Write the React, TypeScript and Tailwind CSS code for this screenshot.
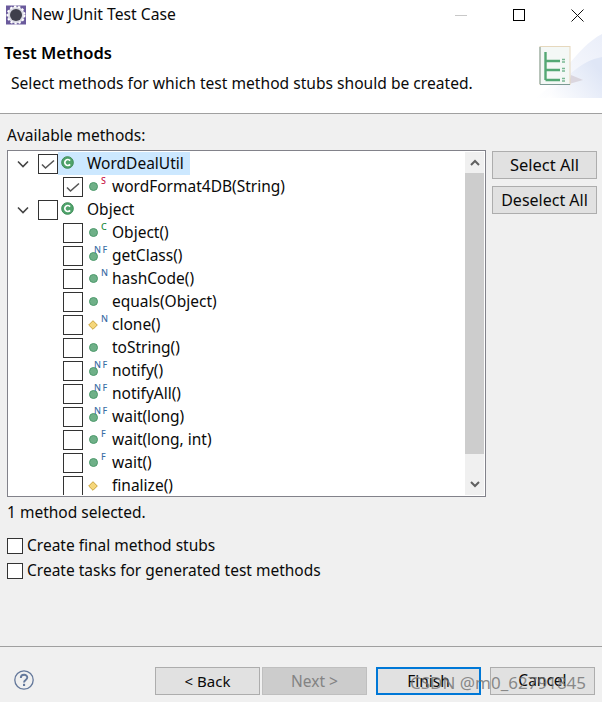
const font = { fontFamily: '"Noto Sans", sans-serif' };

type M = { name: string; kind?: 'dot' | 'diamond'; badge?: string; color?: string; checked?: boolean };

const methods: M[] = [
  { name: 'wordFormat4DB(String)', badge: 'S', color: 'text-[#c8174a]', checked: true },
];
const objectMethods: M[] = [
  { name: 'Object()', badge: 'C', color: 'text-[#1c8a3c]' },
  { name: 'getClass()', badge: 'NF' },
  { name: 'hashCode()', badge: 'N' },
  { name: 'equals(Object)' },
  { name: 'clone()', kind: 'diamond', badge: 'N' },
  { name: 'toString()' },
  { name: 'notify()', badge: 'NF' },
  { name: 'notifyAll()', badge: 'NF' },
  { name: 'wait(long)', badge: 'NF' },
  { name: 'wait(long, int)', badge: 'F' },
  { name: 'wait()', badge: 'F' },
  { name: 'finalize()', kind: 'diamond' },
];

function Check({ checked }: { checked?: boolean }) {
  return (
    <span className="flex h-[20px] w-[20px] shrink-0 items-center justify-center border border-[#333333] bg-white">
      {checked && (
        <svg width="14" height="12" viewBox="0 0 14 12" fill="none">
          <path d="M1 6.5 L4.5 10 L13 2.5" stroke="#555555" strokeWidth="1.6" />
        </svg>
      )}
    </span>
  );
}

function Chevron() {
  return (
    <svg width="12" height="8" viewBox="0 0 12 8" fill="none" className="shrink-0">
      <path d="M1 1.5 L6 6.5 L11 1.5" stroke="#444444" strokeWidth="1.6" />
    </svg>
  );
}

function ClassIcon() {
  return (
    <svg width="13" height="13" viewBox="0 0 14 14" className="mb-[3px] shrink-0">
      <circle cx="7" cy="7" r="6.3" fill="#4fa36b" stroke="#3c8a55" />
      <path d="M9.8 5 A3.2 3.2 0 1 0 9.8 9" fill="none" stroke="#ffffff" strokeWidth="1.8" />
    </svg>
  );
}

function MethodIcon({ m }: { m: M }) {
  const nf = m.badge === 'NF';
  return (
    <span className="relative flex h-[23px] w-[24px] shrink-0 items-center">
      {m.kind === 'diamond' ? (
        <svg width="10" height="10" viewBox="0 0 10 10">
          <path d="M5 .7 L9.3 5 L5 9.3 L.7 5 Z" fill="#f5d67a" stroke="#c9a33a" />
        </svg>
      ) : (
        <span className={`ml-[1px] block h-[9px] w-[9px] rounded-full border border-[#4d9a6c] bg-[#6fb088] ${nf ? 'mt-[1px]' : ''}`} />
      )}
      {m.badge && (
        <span
          className={`absolute top-[1px] text-[9px] leading-[10px] font-medium ${nf ? 'left-[6px] tracking-[1.5px]' : 'left-[13px]'} ${m.color ?? 'text-[#3a6ea5]'}`}
        >
          {m.badge}
        </span>
      )}
    </span>
  );
}

function MethodRow({ m }: { m: M }) {
  return (
    <div className="flex h-[23px] shrink-0 items-center pl-[54px]">
      <Check checked={m.checked} />
      <span className="ml-[5px]"><MethodIcon m={m} /></span>
      <span className="whitespace-nowrap text-[15.5px] text-[#0a0a0a]">{m.name}</span>
    </div>
  );
}

function ClassRow({ name, checked, selected }: { name: string; checked?: boolean; selected?: boolean }) {
  return (
    <div className="flex h-[23px] shrink-0 items-center pl-[8px]">
      <Chevron />
      <span className="ml-[9px]"><Check checked={checked} /></span>
      <span className={`flex h-[23px] items-center pl-[3px] pr-[6px] ${selected ? 'bg-[#cce8ff]' : ''}`}>
        <ClassIcon />
        <span className="ml-[13px] whitespace-nowrap text-[15.5px] text-[#0a0a0a]">{name}</span>
      </span>
    </div>
  );
}

function Button({ label, className = '' }: { label: string; className?: string }) {
  return (
    <button className={`flex h-[28px] items-center justify-center border border-[#adadad] bg-[#e1e1e1] text-[#0a0a0a] ${className}`}>
      {label}
    </button>
  );
}

function Scrollbar() {
  return (
    <div className="flex w-[19px] shrink-0 flex-col bg-[#f0f0f0]">
      <div className="flex h-[21px] items-center justify-center">
        <svg width="10" height="7" viewBox="0 0 10 7" fill="none">
          <path d="M1 6 L5 2 L9 6" stroke="#606060" strokeWidth="2" />
        </svg>
      </div>
      <div className="h-[281px] bg-[#cdcdcd]" />
      <div className="flex-1" />
      <div className="flex h-[21px] items-center justify-center">
        <svg width="10" height="7" viewBox="0 0 10 7" fill="none">
          <path d="M1 1 L5 5 L9 1" stroke="#606060" strokeWidth="2" />
        </svg>
      </div>
    </div>
  );
}

function HeaderArt() {
  return (
    <svg width="67" height="66" viewBox="0 0 67 66" className="shrink-0">
      <defs>
        <linearGradient id="sw" x1="0" y1="1" x2="1" y2="0">
          <stop offset="0" stopColor="#ffffff" />
          <stop offset="1" stopColor="#eaeef9" />
        </linearGradient>
        <linearGradient id="sw2" x1="0" y1="1" x2="1" y2="0.4">
          <stop offset="0" stopColor="#ffffff" />
          <stop offset="1" stopColor="#dfe6f6" />
        </linearGradient>
      </defs>
      <path d="M0 65 C25 50 40 15 67 1 L67 65 Z" fill="url(#sw)" />
      <path d="M12 65 C30 45 45 28 67 24 L67 65 Z" fill="url(#sw2)" />
      <path d="M34 51 L48 47 L36 42 Z" fill="#d3cbd3" opacity="0.7" />
      <rect x="5" y="13.5" width="30" height="38" fill="#f4f8f6" stroke="#e6d8bd" />
      <path d="M5 51.5 H35 M5 14 V51" stroke="#7c9a94" />
      <path d="M10.5 19 V47 M10.5 28 H25 M10.5 37 H25 M10.5 47 H25" stroke="#54a874" strokeWidth="2.4" fill="none" />
      <path d="M27 26.5 H30 M27 29 H30 M27 35.5 H30 M27 38 H30 M27 45.5 H30 M27 48 H30" stroke="#7ab894" strokeWidth="1.3" />
    </svg>
  );
}

export default function App() {
  return (
    <div className="relative flex h-[702px] w-[602px] flex-col overflow-hidden bg-[#f0f0f0]" style={font}>
      <div className="flex h-[30px] shrink-0 items-center bg-white pl-[6px]">
        <svg width="20" height="20" viewBox="0 0 20 20" className="shrink-0">
          <rect width="20" height="19" y="0.5" fill="#6a5a9c" />
          <circle cx="10" cy="10" r="8.5" fill="#d8d8e2" />
          <circle cx="10" cy="10" r="8.5" fill="none" stroke="#ffffff" strokeWidth="2" strokeDasharray="2.2 2" />
          <circle cx="10" cy="10" r="6" fill="#3f3f4c" />
        </svg>
        <span className="ml-[5px] pb-[1px] text-[15.7px] text-[#0a0a0a]">New JUnit Test Case</span>
        <div className="ml-auto flex items-center">
          <div className="flex w-[58px] justify-center"><div className="h-px w-[12px] bg-[#c8c8c8]" /></div>
          <div className="mr-[6px] flex w-[58px] justify-center"><div className="h-[12px] w-[12px] border border-black" /></div>
          <div className="flex w-[48px] justify-center pr-[1px]">
            <svg width="13" height="13" viewBox="0 0 13 13" fill="none"><path d="M.5 .5 L12.5 12.5 M12.5 .5 L.5 12.5" stroke="#111111" /></svg>
          </div>
        </div>
      </div>

      <div className="flex h-[84px] shrink-0 justify-between border-b border-[#a0a0a0] bg-white">
        <div className="pl-[4px] pt-[11px]">
          <div className="text-[16.5px] leading-[24px] font-semibold text-black">Test Methods</div>
          <div className="mt-[8px] pl-[7px] text-[15.6px] leading-[20px] text-[#0a0a0a]">Select methods for which test method stubs should be created.</div>
        </div>
        <div className="pt-[3px]"><HeaderArt /></div>
      </div>

      <div className="flex min-h-0 flex-1 flex-col pl-[7px] pr-[5px] pt-[10px]">
        <div className="text-[15.5px] leading-[22px] text-[#0a0a0a]">Available methods:</div>
        <div className="mt-[4px] flex gap-[6px]">
          <div className="flex h-[347px] w-[479px] shrink-0 border border-[#82828a] bg-white p-px">
            <div className="flex min-w-0 flex-1 flex-col overflow-hidden">
              <ClassRow name="WordDealUtil" checked selected />
              {methods.map((m) => <MethodRow key={m.name} m={m} />)}
              <ClassRow name="Object" />
              {objectMethods.map((m) => <MethodRow key={m.name} m={m} />)}
            </div>
            <Scrollbar />
          </div>
          <div className="flex flex-1 flex-col gap-[7px] pt-px">
            <Button label="Select All" className="w-[105px] text-[16.5px]" />
            <Button label="Deselect All" className="w-[105px] text-[16px]" />
          </div>
        </div>
        <div className="mt-[5px] text-[15.5px] leading-[20px] text-[#0a0a0a]">1 method selected.</div>
        <div className="mt-[16px] flex flex-col gap-[9px]">
          {['Create final method stubs', 'Create tasks for generated test methods'].map((t) => (
            <div key={t} className="flex h-[16px] items-center">
              <span className="block h-[16px] w-[16px] shrink-0 border border-[#333333] bg-white" />
              <span className="ml-[4px] whitespace-nowrap text-[15.5px] text-[#0a0a0a]">{t}</span>
            </div>
          ))}
        </div>
      </div>

      <div className="flex h-[56px] shrink-0 items-start border-t border-[#a0a0a0] pl-[14px] pr-[7px] pt-[20px]">
        <svg width="20" height="20" viewBox="0 0 20 20" fill="none" className="mt-[3px] shrink-0">
          <circle cx="10" cy="10" r="9.2" stroke="#64789b" strokeWidth="1.3" />
          <path d="M6.8 8 C6.8 3.8 13.3 3.8 13.3 7.6 C13.3 10 10 10 10 12.5" stroke="#64789b" strokeWidth="1.9" />
          <rect x="9" y="13.8" width="2.1" height="2.2" fill="#64789b" />
        </svg>
        <div className="ml-auto flex">
          <Button label="< Back" className="w-[105px] text-[15px]" />
          <button className="ml-[2px] flex h-[28px] w-[105px] items-center justify-center border border-[#bfbfbf] bg-[#cccccc] pt-[2px] text-[15.5px] text-[#838383]">Next &gt;</button>
          <button className="ml-[9px] flex h-[28px] w-[105px] items-center justify-center border-2 border-[#0078d7] bg-[#e1e1e1] pt-[2px] text-[15.5px] text-[#0a0a0a]">Finish</button>
          <Button label="Cancel" className="ml-[9px] w-[105px] text-[15.5px]" />
        </div>
      </div>

      <div className="absolute left-[410px] top-[672px] whitespace-nowrap text-[17px] leading-[22px] text-[#707070]/80">CSDN @m0_62791845</div>
    </div>
  );
}
